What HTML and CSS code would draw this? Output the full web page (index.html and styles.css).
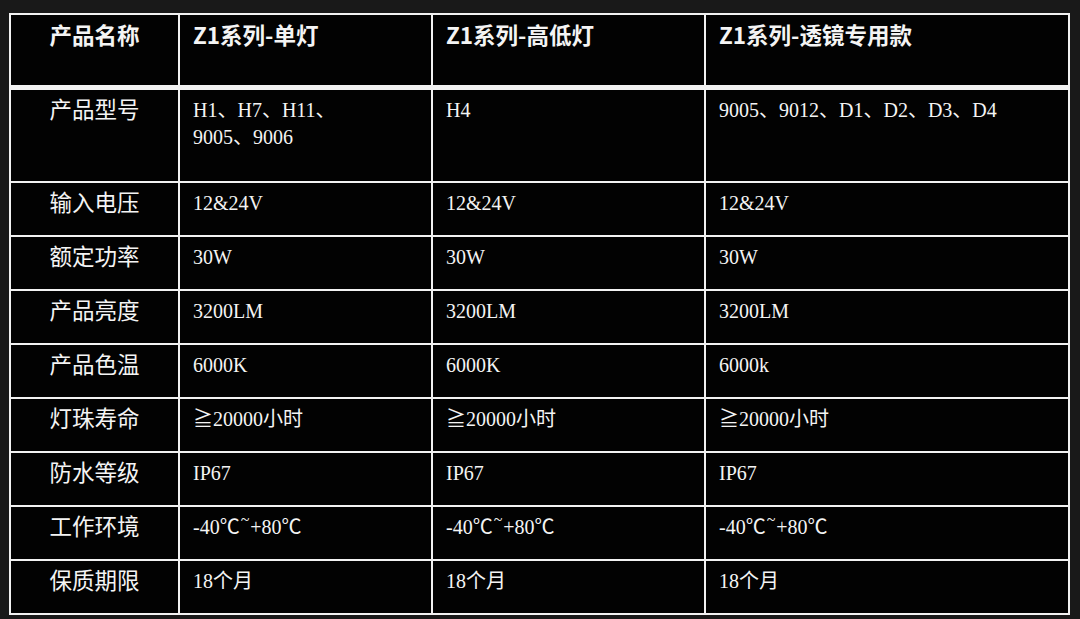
FILE: index.html
```html
<!DOCTYPE html>
<html lang="zh-CN">
<head>
<meta charset="utf-8">
<title>Z1系列 参数表</title>
<link rel="stylesheet" href="styles.css">
</head>
<body>
<table class="spec">
  <colgroup>
    <col class="c1"><col class="c2"><col class="c3"><col class="c4">
  </colgroup>
  <thead>
    <tr class="head">
      <th class="label">产品名称</th>
      <th>Z1系列-单灯</th>
      <th>Z1系列-高低灯</th>
      <th>Z1系列-透镜专用款</th>
    </tr>
  </thead>
  <tbody>
    <tr class="tall">
      <td class="label">产品型号</td>
      <td class="narrow">H1、H7、H11、9005、9006</td>
      <td>H4</td>
      <td>9005、9012、D1、D2、D3、D4</td>
    </tr>
    <tr>
      <td class="label">输入电压</td>
      <td>12&amp;24V</td><td>12&amp;24V</td><td>12&amp;24V</td>
    </tr>
    <tr>
      <td class="label">额定功率</td>
      <td>30W</td><td>30W</td><td>30W</td>
    </tr>
    <tr>
      <td class="label">产品亮度</td>
      <td>3200LM</td><td>3200LM</td><td>3200LM</td>
    </tr>
    <tr>
      <td class="label">产品色温</td>
      <td>6000K</td><td>6000K</td><td>6000k</td>
    </tr>
    <tr>
      <td class="label">灯珠寿命</td>
      <td>≧20000小时</td><td>≧20000小时</td><td>≧20000小时</td>
    </tr>
    <tr>
      <td class="label">防水等级</td>
      <td>IP67</td><td>IP67</td><td>IP67</td>
    </tr>
    <tr>
      <td class="label">工作环境</td>
      <td>-40℃<span class="tilde">~</span>+80℃</td>
      <td>-40℃<span class="tilde">~</span>+80℃</td>
      <td>-40℃<span class="tilde">~</span>+80℃</td>
    </tr>
    <tr>
      <td class="label">保质期限</td>
      <td>18个月</td><td>18个月</td><td>18个月</td>
    </tr>
  </tbody>
</table>
</body>
</html>
```

FILE: styles.css
```css
html, body {
  margin: 0;
  padding: 0;
  background: #191919;
}
body {
  padding: 13px 0 0 9px;
  height: 619px;
  box-sizing: border-box;
  overflow: hidden;
}
.spec {
  border-collapse: collapse;
  table-layout: fixed;
  width: 1059px;
  background: #020202;
  color: #f4f4f4;
}
.c1 { width: 169px; }
.c2 { width: 253px; }
.c3 { width: 273px; }
.c4 { width: 364px; }

.spec th, .spec td {
  border: 2px solid #f2f2f2;
  vertical-align: top;
  text-align: left;
  padding: 7px 12px 0 13px;
  font-family: "Liberation Serif", "Noto Sans CJK SC", serif;
  font-size: 20px;
  font-weight: normal;
  line-height: 27px;
}
.spec td.narrow { padding-right: 40px; }
.spec tr { height: 54px; }
.spec tr.head { height: 73px; }
.spec tr.tall { height: 95px; }

.spec .head th {
  font-family: "Noto Sans CJK SC", "Noto Sans", sans-serif;
  font-weight: bold;
  font-size: 22.5px;
  padding-top: 6px;
  border-bottom: 5px solid #f2f2f2;
}
.spec .label {
  font-family: "Noto Sans CJK SC", "Noto Sans", sans-serif;
  font-size: 22.5px;
  text-align: center;
  padding: 5px 0 0 0;
}
.spec .head th.label { text-align: center; padding-left: 0; padding-right: 0; }
.tilde {
  position: relative;
  top: -9px;
  font-size: 16px;
  margin: 0 1px;
}
```
